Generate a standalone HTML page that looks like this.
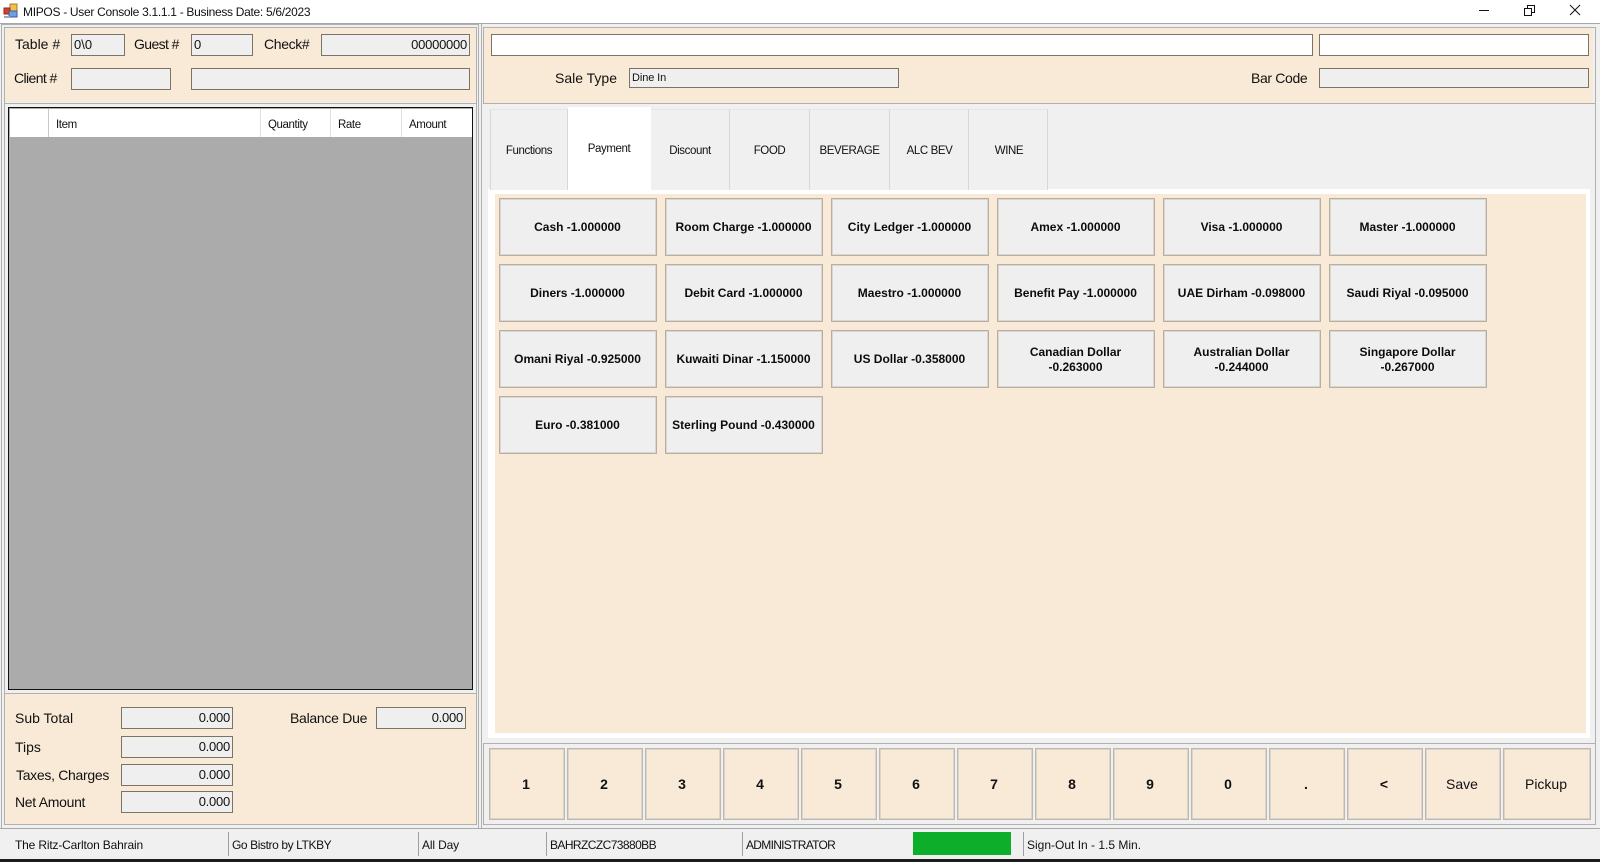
<!DOCTYPE html>
<html><head><meta charset="utf-8"><title>MIPOS</title>
<style>
html,body{margin:0;padding:0;background:#f0f0f0}
#r{position:relative;width:1600px;height:862px;overflow:hidden;background:#f0f0f0;font-family:"Liberation Sans",sans-serif;color:#111}
#r div{position:absolute;box-sizing:border-box}
.t{white-space:nowrap;font-size:14px;line-height:16px}
.i{background:#efefef;border:1px solid #7d7365;font-size:13px;line-height:20px;padding:0 2px;white-space:nowrap;overflow:hidden}
.n{text-align:right;letter-spacing:-.25px}
.b{background:#efefef;border:1px solid #b8aea3;box-shadow:inset 0 0 0 1px #dad6d0;font-weight:bold;font-size:12px;line-height:15px;display:flex;align-items:center;justify-content:center;text-align:center;width:158px;height:58px;padding-right:1px;color:#0c0c0c}
.b2{padding-top:2px}
.k{background:#f9ead7;border:1px solid #bdb9b0;box-shadow:inset 0 0 0 1px #d9d5cb;font-weight:bold;font-size:14px;display:flex;align-items:center;justify-content:center;width:76px;height:72px;padding:0 2px 1px 0}
.h{font-size:11.5px;letter-spacing:-.4px;line-height:14px;top:118px;white-space:nowrap}
.tab{top:109px;height:81px;background:#f0f0f0;border-right:1px solid #d8d8d8;border-top:1px solid #e4e4e4;font-size:11.5px;letter-spacing:-.4px;display:flex;align-items:center;justify-content:center;padding:1px 0 0 0}
.s{font-size:12px;line-height:14px;top:838px;white-space:nowrap}
.v{top:832px;width:1px;height:24px;background:#a0a0a0}
</style></head><body><div id="r">
<div style="left:0;top:0;width:1600px;height:23px;background:#fff"></div>
<svg style="position:absolute;left:3px;top:3px" width="15" height="16" viewBox="0 0 15 16"><rect x="7" y="1" width="7" height="7" fill="#f2c14a" stroke="#a97c20"/><rect x="1" y="5" width="6" height="6" fill="#d8402c" stroke="#8c2a1d"/><rect x="6" y="8" width="8" height="6" fill="#6f9fe0" stroke="#3a5f9e"/><rect x="1" y="13" width="6" height="2" fill="#9ab"/></svg>
<div class="t" style="left:23px;top:4px;font-size:12px;line-height:16px;letter-spacing:-.3px">MIPOS - User Console 3.1.1.1 - Business Date: 5/6/2023</div>
<svg style="position:absolute;left:1470px;top:0" width="130" height="22" viewBox="0 0 130 22" fill="none" stroke="#111" stroke-width="1"><path d="M9 10.500H19"/><path d="M54.500 8.500h7v7h-7zM57.500 8.500v-3h7v7h-3"/><path d="M100 5l10 10M110 5l-10 10"/></svg>

<!-- frame lines -->
<div style="left:0;top:23px;width:1600px;height:1px;background:#a8a8a8"></div>
<div style="left:1px;top:24px;width:478px;height:805px;border:1px solid #b0b0b0;border-bottom:0"></div>
<div style="left:4px;top:27px;width:473px;height:798px;border:1px solid #b0b0b0"></div>
<div style="left:481px;top:24px;width:1119px;height:805px;border-left:1px solid #b0b0b0"></div>
<div style="left:483px;top:27px;width:1113px;height:77px;border:1px solid #b0b0b0"></div>
<div style="left:1595px;top:27px;width:1px;height:798px;background:#b0b0b0"></div>

<!-- left header -->
<div style="left:5px;top:28px;width:471px;height:74px;background:#f9ead7"></div>
<div style="left:4px;top:103px;width:473px;height:1px;background:#b0b0b0"></div>
<div class="t" style="left:15px;top:36px">Table #</div>
<div class="i" style="left:71px;top:34px;width:54px;height:22px">0\0</div>
<div class="t" style="left:134px;top:36px;letter-spacing:-.6px">Guest #</div>
<div class="i" style="left:191px;top:34px;width:62px;height:22px">0</div>
<div class="t" style="left:264px;top:36px;letter-spacing:-.35px">Check#</div>
<div class="i n" style="left:321px;top:34px;width:149px;height:22px">00000000</div>
<div class="t" style="left:14px;top:70px;letter-spacing:-.6px">Client #</div>
<div class="i" style="left:71px;top:68px;width:100px;height:22px"></div>
<div class="i" style="left:191px;top:68px;width:279px;height:22px"></div>

<!-- grid -->
<div style="left:8px;top:107px;width:465px;height:583px;background:#ababab;border:1.5px solid #111"></div>
<div style="left:10px;top:109px;width:462px;height:28px;background:#fff"></div>
<div style="left:48px;top:109px;width:1px;height:28px;background:#c8c8c8"></div>
<div style="left:260px;top:109px;width:1px;height:28px;background:#e0e0e0"></div>
<div style="left:330px;top:109px;width:1px;height:28px;background:#e0e0e0"></div>
<div style="left:401px;top:109px;width:1px;height:28px;background:#e0e0e0"></div>
<div class="h" style="left:56px">Item</div>
<div class="h" style="left:268px">Quantity</div>
<div class="h" style="left:338px">Rate</div>
<div class="h" style="left:409px">Amount</div>

<!-- totals -->
<div style="left:4px;top:693px;width:473px;height:1px;background:#b0b0b0"></div>
<div style="left:5px;top:694px;width:471px;height:130px;background:#f9ead7"></div>
<div class="t" style="left:15px;top:710px">Sub Total</div>
<div class="i n" style="left:121px;top:707px;width:112px;height:22px">0.000</div>
<div class="t" style="left:290px;top:710px;letter-spacing:-.28px">Balance Due</div>
<div class="i n" style="left:376px;top:707px;width:90px;height:22px">0.000</div>
<div class="t" style="left:15px;top:739px">Tips</div>
<div class="i n" style="left:121px;top:736px;width:112px;height:22px">0.000</div>
<div class="t" style="left:16px;top:767px;letter-spacing:-.3px">Taxes, Charges</div>
<div class="i n" style="left:121px;top:764px;width:112px;height:22px">0.000</div>
<div class="t" style="left:15px;top:794px;letter-spacing:-.3px">Net Amount</div>
<div class="i n" style="left:121px;top:791px;width:112px;height:22px">0.000</div>

<!-- right header -->
<div style="left:484px;top:28px;width:1109px;height:75px;background:#f9ead7"></div>
<div class="i" style="left:491px;top:34px;width:822px;height:22px;background:#fff"></div>
<div class="i" style="left:1319px;top:34px;width:270px;height:22px;background:#fff"></div>
<div class="t" style="left:555px;top:70px">Sale Type</div>
<div class="i" style="left:629px;top:68px;width:270px;height:20px;font-size:11px;line-height:19px;letter-spacing:-.1px">Dine In</div>
<div class="t" style="left:1251px;top:70px;letter-spacing:-.35px">Bar Code</div>
<div class="i" style="left:1319px;top:68px;width:270px;height:20px"></div>

<!-- tabs -->
<div style="left:488px;top:189px;width:1102px;height:549px;background:#fff"></div>
<div class="tab" style="left:490px;width:78px;border-left:1px solid #d8d8d8">Functions</div>
<div class="tab" style="left:568px;top:107px;width:83px;height:84px;background:#fff;border:0;padding:0 1px 1px 0;z-index:1">Payment</div>
<div class="tab" style="left:651px;width:79px">Discount</div>
<div class="tab" style="left:730px;width:80px">FOOD</div>
<div class="tab" style="left:810px;width:80px">BEVERAGE</div>
<div class="tab" style="left:890px;width:79px;padding-left:1px">ALC BEV</div>
<div class="tab" style="left:969px;width:79px;padding-left:2px">WINE</div>
<div style="left:495px;top:194px;width:1091px;height:539px;background:#f9ead7"></div>

<!-- payment buttons -->
<div class="b" style="left:499px;top:198px">Cash -1.000000</div>
<div class="b" style="left:665px;top:198px">Room Charge -1.000000</div>
<div class="b" style="left:831px;top:198px">City Ledger -1.000000</div>
<div class="b" style="left:997px;top:198px">Amex -1.000000</div>
<div class="b" style="left:1163px;top:198px">Visa -1.000000</div>
<div class="b" style="left:1329px;top:198px">Master -1.000000</div>
<div class="b" style="left:499px;top:264px">Diners -1.000000</div>
<div class="b" style="left:665px;top:264px">Debit Card -1.000000</div>
<div class="b" style="left:831px;top:264px">Maestro -1.000000</div>
<div class="b" style="left:997px;top:264px">Benefit Pay -1.000000</div>
<div class="b" style="left:1163px;top:264px">UAE Dirham -0.098000</div>
<div class="b" style="left:1329px;top:264px">Saudi Riyal -0.095000</div>
<div class="b" style="left:499px;top:330px">Omani Riyal -0.925000</div>
<div class="b" style="left:665px;top:330px">Kuwaiti Dinar -1.150000</div>
<div class="b" style="left:831px;top:330px">US Dollar -0.358000</div>
<div class="b b2" style="left:997px;top:330px">Canadian Dollar<br>-0.263000</div>
<div class="b b2" style="left:1163px;top:330px">Australian Dollar<br>-0.244000</div>
<div class="b b2" style="left:1329px;top:330px">Singapore Dollar<br>-0.267000</div>
<div class="b" style="left:499px;top:396px">Euro -0.381000</div>
<div class="b" style="left:665px;top:396px">Sterling Pound -0.430000</div>

<!-- keypad -->
<div style="left:483px;top:743px;width:1113px;height:82px;border:1px solid #b0b0b0"></div>
<div class="k" style="left:489px;top:748px">1</div>
<div class="k" style="left:567px;top:748px">2</div>
<div class="k" style="left:645px;top:748px">3</div>
<div class="k" style="left:723px;top:748px">4</div>
<div class="k" style="left:801px;top:748px">5</div>
<div class="k" style="left:879px;top:748px">6</div>
<div class="k" style="left:957px;top:748px">7</div>
<div class="k" style="left:1035px;top:748px">8</div>
<div class="k" style="left:1113px;top:748px">9</div>
<div class="k" style="left:1191px;top:748px">0</div>
<div class="k" style="left:1269px;top:748px">.</div>
<div class="k" style="left:1347px;top:748px">&lt;</div>
<div class="k" style="left:1425px;top:748px;font-weight:normal">Save</div>
<div class="k" style="left:1503px;top:748px;width:88px;font-weight:normal">Pickup</div>

<!-- status -->
<div style="left:0;top:828px;width:1600px;height:1px;background:#a8a8a8"></div>
<div class="s" style="left:15px;letter-spacing:-.17px">The Ritz-Carlton Bahrain</div>
<div class="v" style="left:228px"></div>
<div class="s" style="left:232px;letter-spacing:-.4px">Go Bistro by LTKBY</div>
<div class="v" style="left:418px"></div>
<div class="s" style="left:422px;letter-spacing:-.15px">All Day</div>
<div class="v" style="left:546px"></div>
<div class="s" style="left:550px;letter-spacing:-.58px">BAHRZCZC73880BB</div>
<div class="v" style="left:742px"></div>
<div class="s" style="left:746px;letter-spacing:-.7px">ADMINISTRATOR</div>
<div style="left:913px;top:832px;width:98px;height:23px;background:#0cae2a"></div>
<div class="v" style="left:1023px"></div>
<div class="s" style="left:1027px">Sign-Out In - 1.5 Min.</div>
<div style="left:0;top:859px;width:1600px;height:3px;background:#1c1c1c"></div>
</div></body></html>
